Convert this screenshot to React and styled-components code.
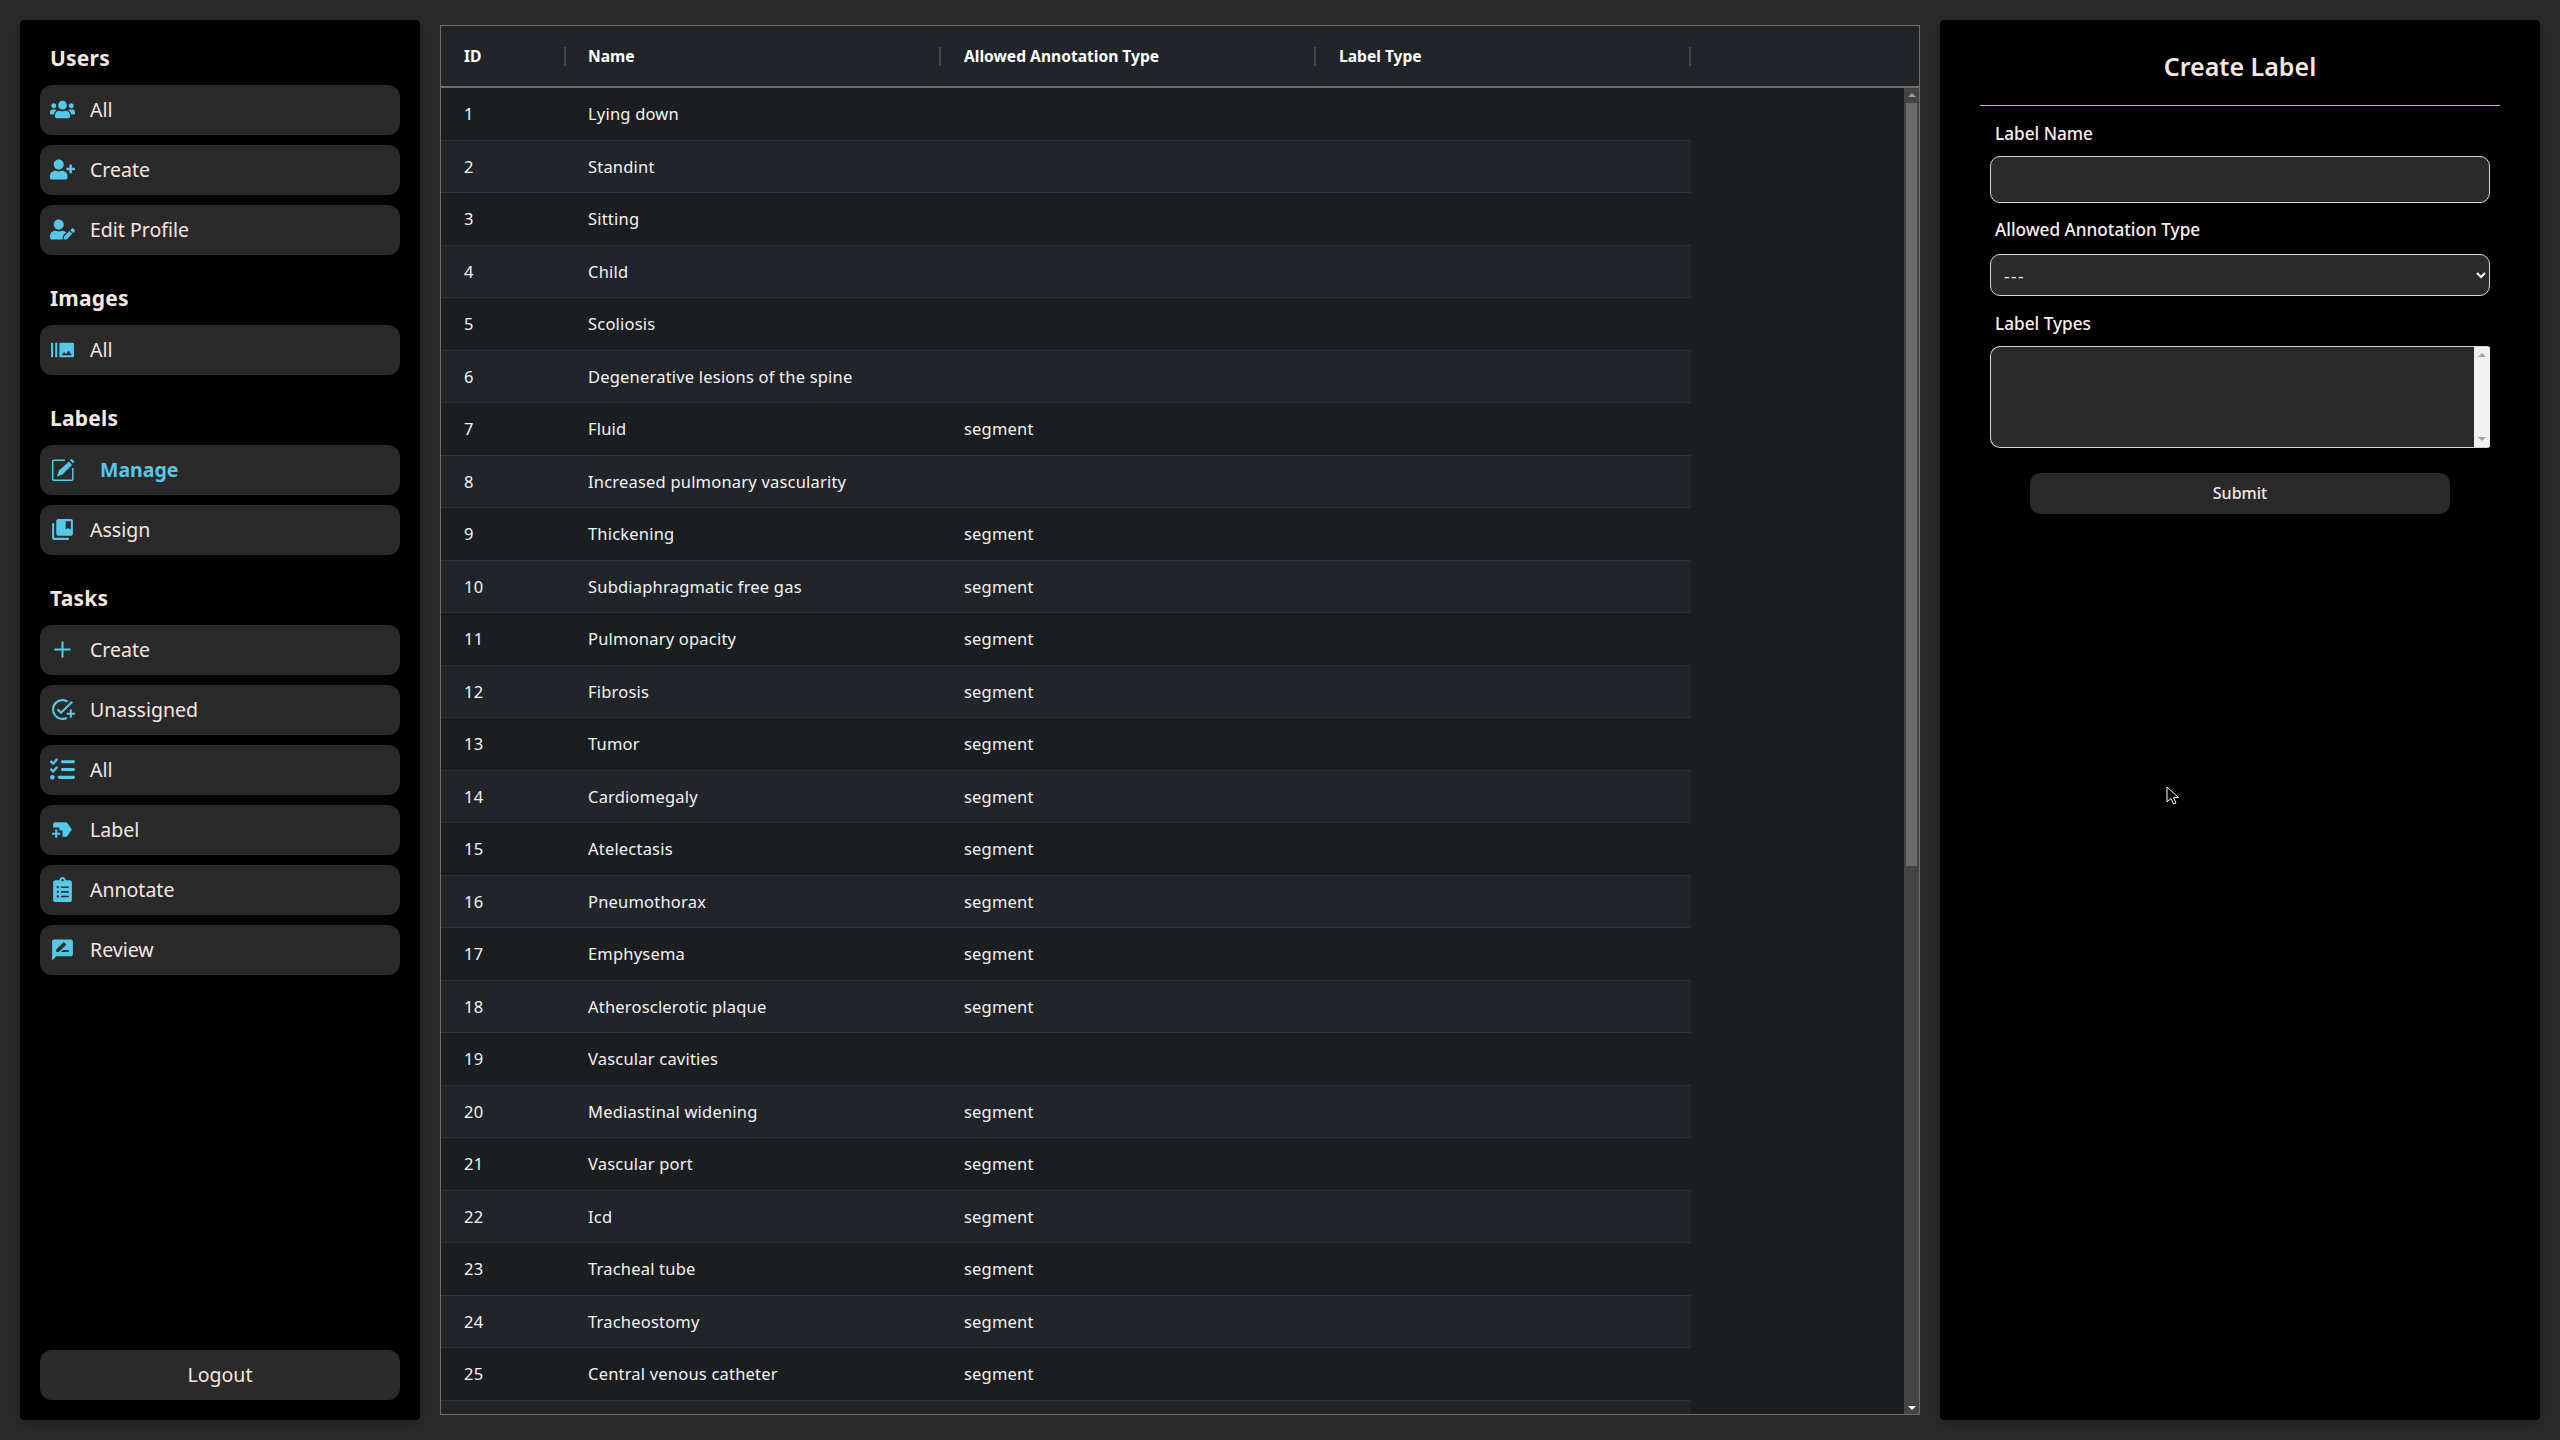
import React from 'react';
import styled, { createGlobalStyle } from 'styled-components';
import {
  FaUsers,
  FaUserPlus,
  FaUserEdit,
  FaClipboardList,
} from 'react-icons/fa';
import { FaListCheck } from 'react-icons/fa6';
import { FiPlus } from 'react-icons/fi';
import {
  MdBurstMode,
  MdCollectionsBookmark,
  MdOutlineAddTask,
  MdNewLabel,
  MdRateReview,
} from 'react-icons/md';

const FONT = '"Noto Sans", "Open Sans", sans-serif';
const ACCENT = '#56c8e8';
const TEXT = '#f5e6e3';

const GlobalStyle = createGlobalStyle`
  html, body {
    margin: 0;
    height: 100%;
    background: #2a2a2a;
    font-family: ${FONT};
    color: ${TEXT};
  }
  * { box-sizing: border-box; }
`;

const Page = styled.div`
  width: 2560px;
  height: 1440px;
  padding: 20px;
  display: grid;
  grid-template-columns: 400px 1480px 600px;
  column-gap: 20px;
  position: relative;
  overflow: hidden;
`;

const Sidebar = styled.nav`
  background: #000;
  border-radius: 4px;
  box-shadow: 0 4px 12px rgba(0, 0, 0, 0.25);
  padding: 23px 20px 20px;
  display: flex;
  flex-direction: column;
`;

const SectionTitle = styled.h3`
  margin: 0 0 12px 10px;
  height: 30px;
  line-height: 30px;
  font-size: 21px;
  font-weight: 700;
  letter-spacing: 0.2px;
`;

const NavList = styled.div`
  display: flex;
  flex-direction: column;
  gap: 10px;
  margin-bottom: 28px;
`;

const NavButton = styled.a`
  height: 50px;
  border-radius: 12px;
  background: #2a2a2a;
  display: flex;
  align-items: center;
  padding: 0 0 1px 10px;
  font-size: 19.5px;
  font-weight: ${(p) => (p.$active ? 700 : 400)};
  color: ${(p) => (p.$active ? ACCENT : TEXT)};
`;

const IconBox = styled.span`
  width: 25px;
  height: 25px;
  margin-right: ${(p) => (p.$active ? 25 : 15)}px;
  display: flex;
  align-items: center;
  justify-content: center;
  color: ${ACCENT};
  font-size: ${(p) => p.$size || 25}px;
  flex: none;
`;

const Logout = styled.button`
  margin-top: auto;
  height: 50px;
  border: 0;
  border-radius: 12px;
  background: #2a2a2a;
  color: ${TEXT};
  font-family: ${FONT};
  font-size: 19.5px;
  padding: 0 0 2px;
`;

const TableWrap = styled.section`
  margin: 5px 0;
  border: 1.5px solid #6d6d72;
  background: #1a1e21;
  display: flex;
  flex-direction: column;
  overflow: hidden;
`;

const HeaderRow = styled.div`
  height: 62px;
  flex: none;
  background: #212529;
  border-bottom: 2px solid #6d6d72;
  display: flex;
  align-items: center;
`;

const HeaderCell = styled.div`
  width: ${(p) => p.$w}px;
  height: 19px;
  padding-left: ${(p) => p.$pad}px;
  border-right: 2px solid #44474a;
  display: flex;
  align-items: center;
  font-size: 15.6px;
  font-weight: 700;
  color: #fff;
`;

const TableBody = styled.div`
  flex: 1;
  min-height: 0;
  display: flex;
`;

const Rows = styled.div`
  flex: 1;
  overflow: hidden;
`;

const Row = styled.div`
  width: 1250px;
  height: 52.5px;
  display: flex;
  align-items: center;
  background: ${(p) => (p.$even ? '#212529' : '#1a1e21')};
  border-bottom: 1px solid #2d3135;
`;

const Cell = styled.div`
  width: ${(p) => p.$w}px;
  padding-left: ${(p) => p.$pad}px;
  font-size: 16.5px;
  letter-spacing: 0.2px;
  color: #f3f3f3;
`;

const ScrollTrack = styled.div`
  width: 15px;
  flex: none;
  background: #444;
  padding: 5px 2px 4px;
  display: flex;
  flex-direction: column;
  align-items: center;
`;

const ScrollThumb = styled.div`
  width: 11px;
  height: 763px;
  margin-top: 6px;
  background: #6b6b6b;
`;

const Arrow = styled.span`
  width: 0;
  height: 0;
  border-left: 4px solid transparent;
  border-right: 4px solid transparent;
  border-${(p) => (p.$down ? 'top' : 'bottom')}: 4px solid ${(p) => p.$color};
  margin-top: ${(p) => (p.$down ? 'auto' : '0')};
`;

const FormPanel = styled.aside`
  background: #000;
  border-radius: 4px;
  box-shadow: 0 4px 12px rgba(0, 0, 0, 0.25);
  padding: 26px 40px 0;
`;

const Title = styled.h2`
  margin: 0;
  height: 40px;
  line-height: 40px;
  text-align: center;
  font-size: 25px;
  font-weight: 600;
`;

const Divider = styled.hr`
  margin: 19px 0 16px;
  border: 0;
  border-top: 1px solid #62d2f2;
`;

const Form = styled.form`
  padding: 0 10px;
  display: flex;
  flex-direction: column;
`;

const FieldLabel = styled.label`
  display: block;
  height: 24px;
  line-height: 24px;
  margin: ${(p) => p.$mt || 0}px 0 10px 5px;
  font-size: 17.2px;
  font-weight: 500;
  color: #fbeeee;
`;

const TextInput = styled.input`
  height: 47px;
  border: 1px solid #d8d8d8;
  border-radius: 10px;
  background: #2a2a2a;
  outline: none;
`;

const Select = styled.select`
  height: 42px;
  margin-top: 2px;
  border: 1px solid #d8d8d8;
  border-radius: 10px;
  background: #2a2a2a;
  color: #fff;
  font-family: ${FONT};
  font-size: 17px;
  letter-spacing: 1.5px;
  padding-left: 9px;
  color-scheme: dark;
`;

const MultiSelect = styled.div`
  height: 102px;
  border: 1px solid #d8d8d8;
  border-right: 0;
  border-radius: 10px 3px 3px 10px;
  background: #2a2a2a;
  display: flex;
  justify-content: flex-end;
`;

const MultiScroll = styled.div`
  width: 16px;
  background: #f1f1f1;
  padding: 6px 0;
  display: flex;
  flex-direction: column;
  align-items: center;
`;

const Submit = styled.button`
  width: 420px;
  height: 41px;
  margin: 25px auto 0;
  border: 0;
  border-radius: 10px;
  background: #2a2a2a;
  color: ${TEXT};
  font-family: ${FONT};
  font-size: 16px;
  font-weight: 500;
  padding: 0 0 2px;
`;

const Cursor = styled.svg`
  position: absolute;
  left: 2166px;
  top: 786px;
`;

// no package icon has this thin box with a solid pencil
const ManageIcon = () => (
  <svg width="25" height="25" viewBox="0 0 25 25" fill="currentColor">
    <path
      d="M15 3.2H4a1.3 1.3 0 0 0-1.3 1.3V22A1.3 1.3 0 0 0 4 23.3h17.5a1.3 1.3 0 0 0 1.3-1.3V11"
      fill="none"
      stroke="currentColor"
      strokeWidth="1.5"
    />
    <path d="M7 19.5l2-6L19 4.5l3 3.5-9.5 9.5z" />
    <path d="M20 3.3l1.5-1.5 3 2.7-1.5 1.8z" />
  </svg>
);

const NAV = [
  { title: 'Users', items: [
    { label: 'All', icon: <FaUsers /> },
    { label: 'Create', icon: <FaUserPlus /> },
    { label: 'Edit Profile', icon: <FaUserEdit /> },
  ] },
  { title: 'Images', items: [{ label: 'All', icon: <MdBurstMode />, size: 28 }] },
  { title: 'Labels', items: [
    { label: 'Manage', icon: <ManageIcon />, active: true },
    { label: 'Assign', icon: <MdCollectionsBookmark />, size: 27 },
  ] },
  { title: 'Tasks', items: [
    { label: 'Create', icon: <FiPlus /> },
    { label: 'Unassigned', icon: <MdOutlineAddTask />, size: 27 },
    { label: 'All', icon: <FaListCheck /> },
    { label: 'Label', icon: <MdNewLabel />, size: 27 },
    { label: 'Annotate', icon: <FaClipboardList />, size: 25 },
    { label: 'Review', icon: <MdRateReview />, size: 26 },
  ] },
];

const LABELS = [
  ['Lying down', ''], ['Standint', ''], ['Sitting', ''], ['Child', ''], ['Scoliosis', ''],
  ['Degenerative lesions of the spine', ''], ['Fluid', 'segment'],
  ['Increased pulmonary vascularity', ''], ['Thickening', 'segment'],
  ['Subdiaphragmatic free gas', 'segment'], ['Pulmonary opacity', 'segment'],
  ['Fibrosis', 'segment'], ['Tumor', 'segment'], ['Cardiomegaly', 'segment'],
  ['Atelectasis', 'segment'], ['Pneumothorax', 'segment'], ['Emphysema', 'segment'],
  ['Atherosclerotic plaque', 'segment'], ['Vascular cavities', ''],
  ['Mediastinal widening', 'segment'], ['Vascular port', 'segment'], ['Icd', 'segment'],
  ['Tracheal tube', 'segment'], ['Tracheostomy', 'segment'],
  ['Central venous catheter', 'segment'],
];

const COLUMNS = [
  { name: 'ID', w: 125, pad: 23 },
  { name: 'Name', w: 375, pad: 22 },
  { name: 'Allowed Annotation Type', w: 375, pad: 23 },
  { name: 'Label Type', w: 375, pad: 23 },
];

const App = () => (
  <Page>
    <GlobalStyle />
    <Sidebar>
      {NAV.map((section) => (
        <div key={section.title}>
          <SectionTitle>{section.title}</SectionTitle>
          <NavList>
            {section.items.map((item) => (
              <NavButton key={item.label} $active={item.active}>
                <IconBox $size={item.size} $active={item.active}>{item.icon}</IconBox>
                {item.label}
              </NavButton>
            ))}
          </NavList>
        </div>
      ))}
      <Logout>Logout</Logout>
    </Sidebar>

    <TableWrap>
      <HeaderRow>
        {COLUMNS.map((col) => (
          <HeaderCell key={col.name} $w={col.w} $pad={col.pad}>{col.name}</HeaderCell>
        ))}
      </HeaderRow>
      <TableBody>
        <Rows>
          {LABELS.map(([name, type], i) => (
            <Row key={name} $even={i % 2 === 1}>
              <Cell $w={125} $pad={23}>{i + 1}</Cell>
              <Cell $w={375} $pad={22}>{name}</Cell>
              <Cell $w={375} $pad={23}>{type}</Cell>
              <Cell $w={375} $pad={23} />
            </Row>
          ))}
          <Row $even />
        </Rows>
        <ScrollTrack>
          <Arrow $color="#999" />
          <ScrollThumb />
          <Arrow $down $color="#fff" />
        </ScrollTrack>
      </TableBody>
    </TableWrap>

    <FormPanel>
      <Title>Create Label</Title>
      <Divider />
      <Form>
        <FieldLabel>Label Name</FieldLabel>
        <TextInput />
        <FieldLabel $mt={15}>Allowed Annotation Type</FieldLabel>
        <Select defaultValue="">
          <option value="">---</option>
        </Select>
        <FieldLabel $mt={16}>Label Types</FieldLabel>
        <MultiSelect>
          <MultiScroll>
            <Arrow $color="#a3a3a3" />
            <Arrow $down $color="#a3a3a3" />
          </MultiScroll>
        </MultiSelect>
        <Submit type="button">Submit</Submit>
      </Form>
    </FormPanel>

    <Cursor width="14" height="20" viewBox="0 0 14 20">
      <path d="M1 1v15l4-3.5 2.5 5.5 2.5-1-2.5-5.5h5z" fill="#000" stroke="#fff" strokeWidth="1" />
    </Cursor>
  </Page>
);

export default App;
